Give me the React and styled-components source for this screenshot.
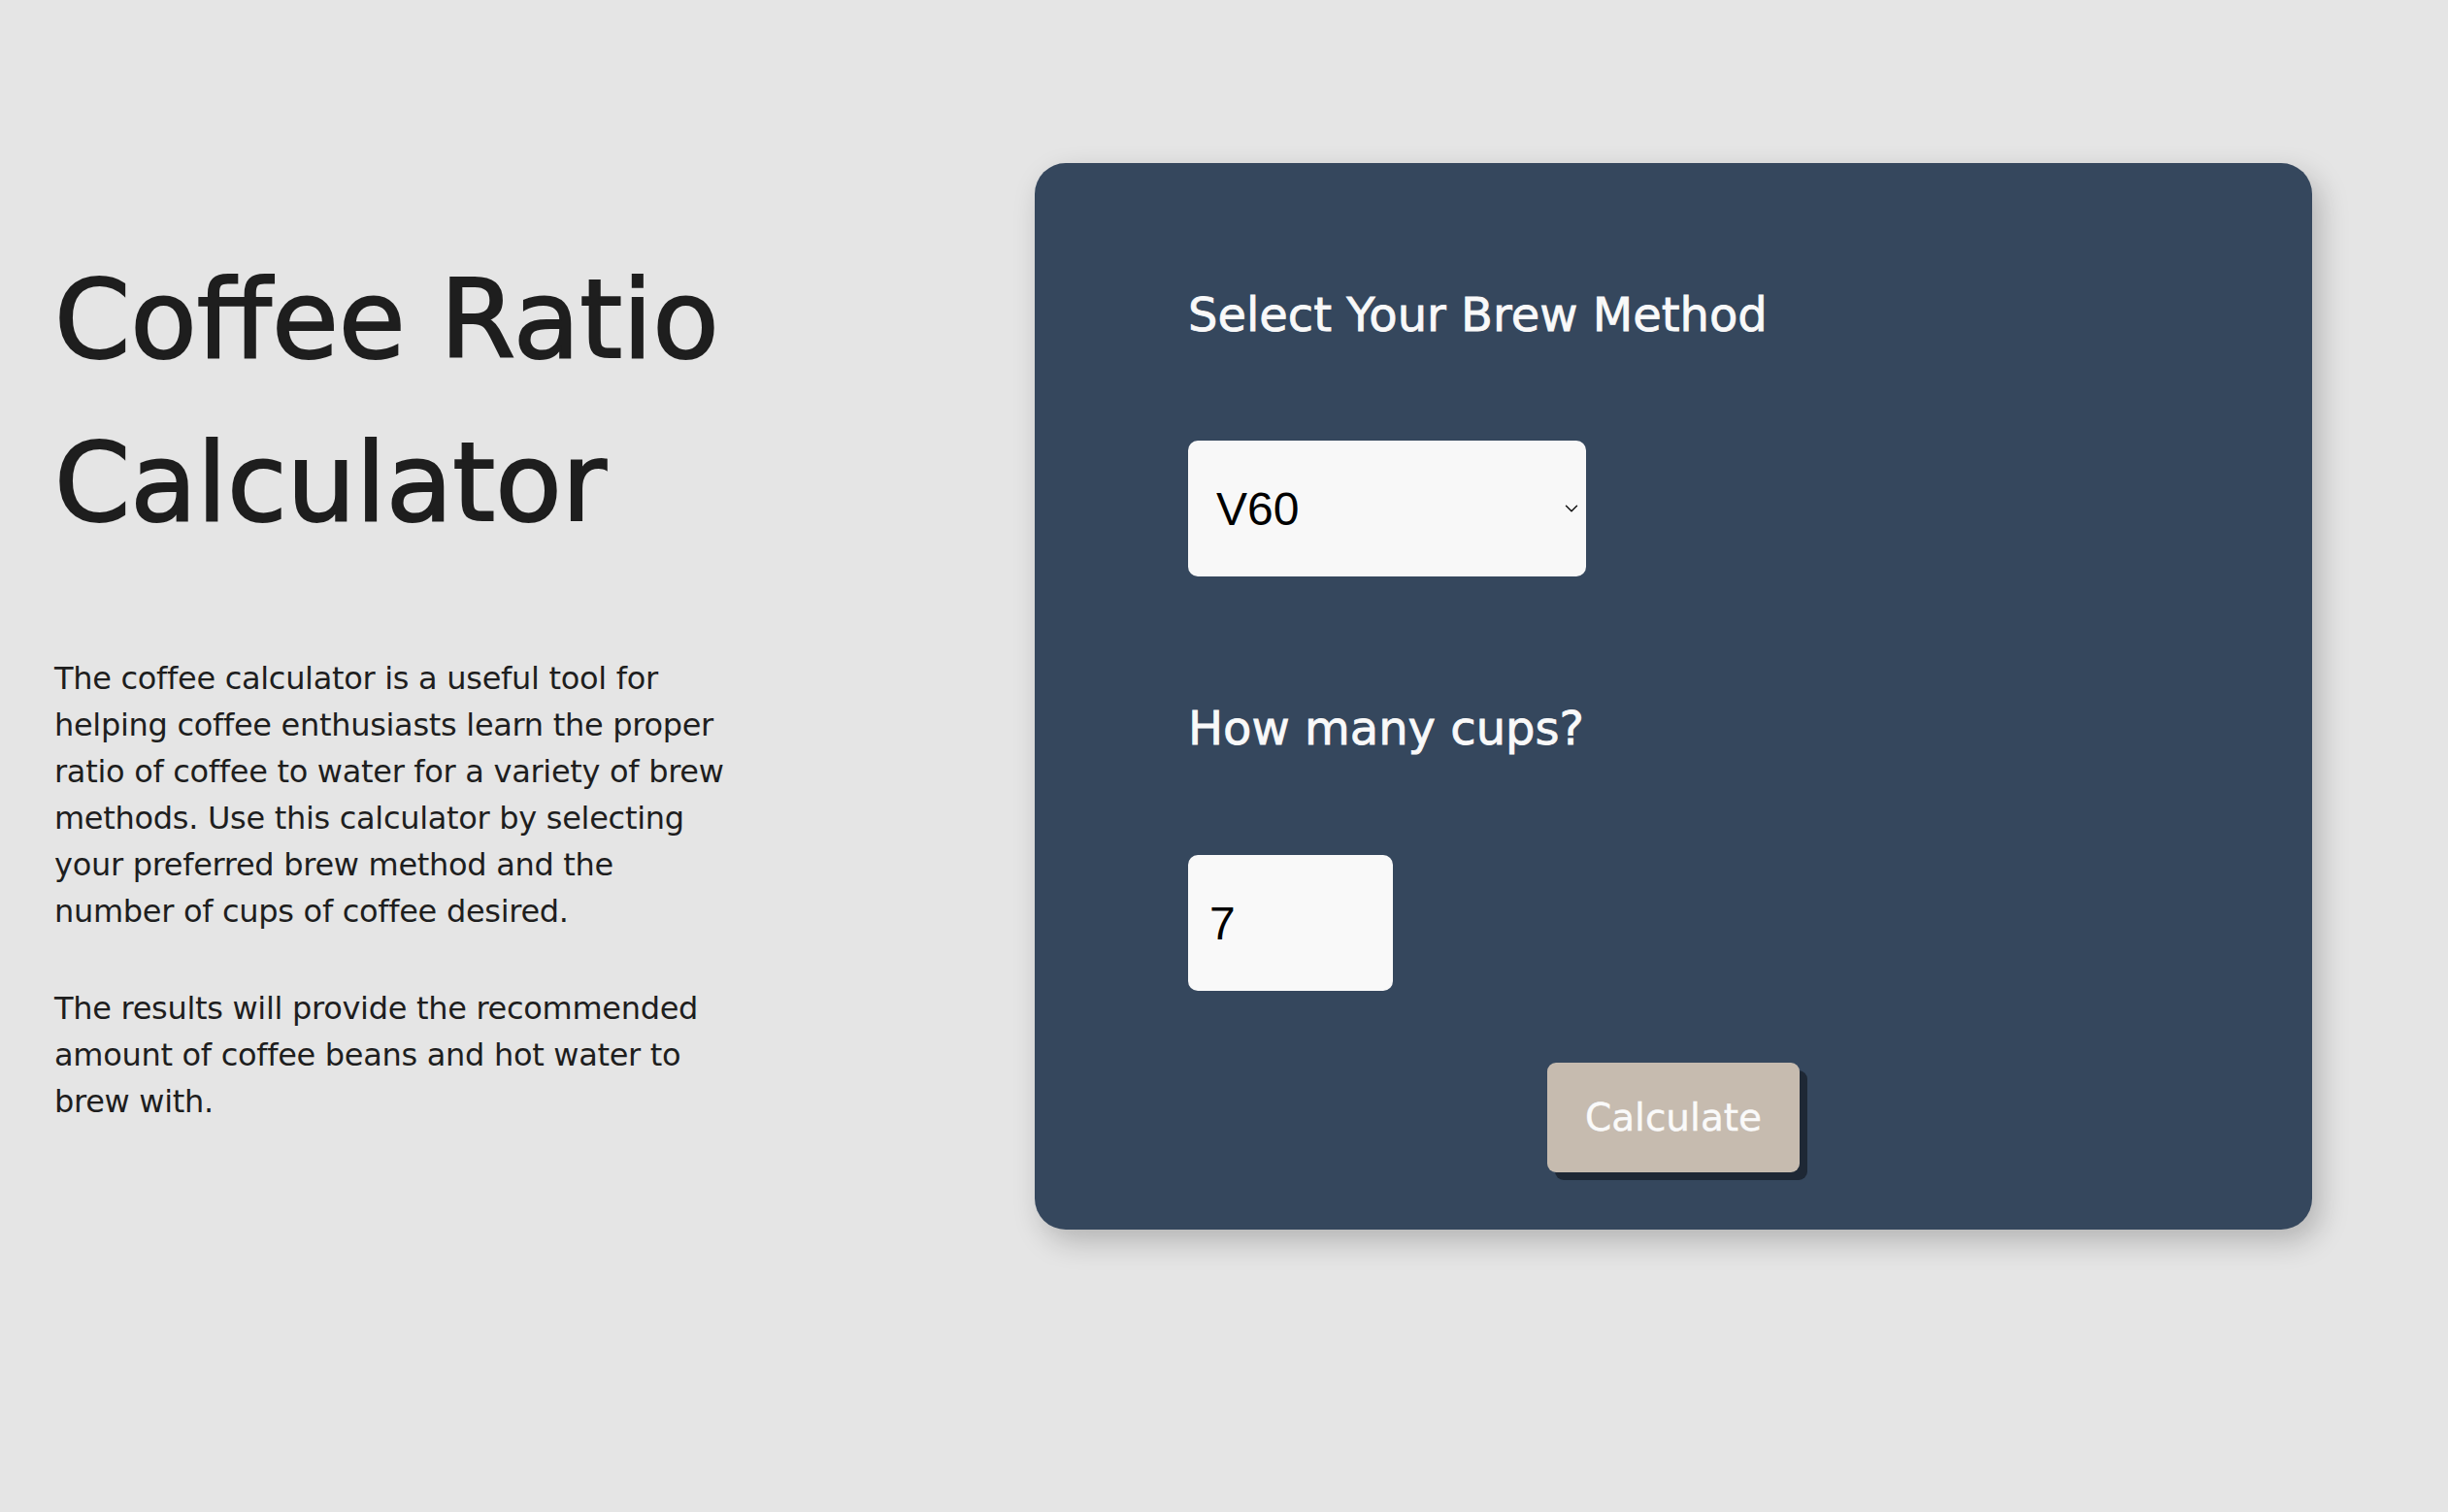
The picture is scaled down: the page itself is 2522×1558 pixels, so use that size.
import React, { useState } from 'react';
import styled, { createGlobalStyle } from 'styled-components';
import { ChevronDown } from 'lucide-react';

const GlobalStyle = createGlobalStyle`
  * {
    box-sizing: border-box;
  }

  body {
    margin: 0;
    background-color: #e5e5e5;
    font-family: 'DejaVu Sans', sans-serif;
  }
`;

const Page = styled.main`
  min-height: 100vh;
  display: flex;
  align-items: flex-start;
  padding: 168px 0 0 56px;
`;

const Intro = styled.section`
  flex: none;
  width: 1010px;
  padding-top: 77px;
`;

const Title = styled.h1`
  margin: 0;
  width: 760px;
  font-size: 112px;
  font-weight: 400;
  line-height: 168px;
  color: #1e1e1e;
  -webkit-text-stroke: 2px #1e1e1e;
`;

const Text = styled.p`
  margin: 0;
  margin-top: ${(p) => p.gap}px;
  width: 698px;
  font-size: 32px;
  line-height: 48px;
  letter-spacing: -0.3px;
  color: #1e1e1e;
`;

const Card = styled.form`
  flex: none;
  width: 1316px;
  display: flex;
  flex-direction: column;
  align-items: flex-start;
  padding: 120px 158px 59px;
  background-color: #35475d;
  border-radius: 32px;
  box-shadow: 8px 12px 30px rgba(0, 0, 0, 0.22);
`;

const Label = styled.h2`
  margin: 0;
  margin-top: ${(p) => p.gap || 0}px;
  font-size: 48px;
  font-weight: 400;
  line-height: 72px;
  color: #f9f9f9;
  -webkit-text-stroke: 0.8px #f9f9f9;
`;

const SelectWrap = styled.div`
  position: relative;
  margin-top: 94px;
  width: 410px;
  height: 140px;

  svg {
    position: absolute;
    top: 50%;
    right: 4px;
    transform: translateY(-50%);
    pointer-events: none;
    color: #111;
  }
`;

const Select = styled.select`
  appearance: none;
  width: 100%;
  height: 100%;
  padding: 0 30px 0 29px;
  border: none;
  border-radius: 10px;
  background-color: #f8f8f8;
  font-family: 'Liberation Sans', Arial, sans-serif;
  font-size: 48px;
  color: #000;
  outline: none;
`;

const CupsInput = styled.input`
  margin-top: 95px;
  width: 211px;
  height: 140px;
  padding: 0 20px 0 22px;
  border: none;
  border-radius: 10px;
  background-color: #f9f9f9;
  font-family: 'Liberation Sans', Arial, sans-serif;
  font-size: 48px;
  color: #000;
  outline: none;
`;

const Button = styled.button`
  align-self: center;
  margin-top: 74px;
  width: 260px;
  height: 113px;
  border: none;
  border-radius: 9px;
  background-color: #c6bbaf;
  box-shadow: 8px 8px 0 #1e2835;
  font-family: 'DejaVu Sans', sans-serif;
  font-size: 39px;
  color: #fafafa;
  -webkit-text-stroke: 0.4px #fafafa;
  cursor: pointer;
`;

const App = () => {
  const [method, setMethod] = useState('V60');
  const [cups, setCups] = useState('7');

  return (
    <>
      <GlobalStyle />
      <Page>
        <Intro>
          <Title>Coffee Ratio Calculator</Title>
          <Text gap={94}>
            The coffee calculator is a useful tool for helping coffee enthusiasts
            learn the proper ratio of coffee to water for a variety of brew methods.
            Use this calculator by selecting your preferred brew method and the
            number of cups of coffee desired.
          </Text>
          <Text gap={52}>
            The results will provide the recommended amount of coffee beans and hot
            water to brew with.
          </Text>
        </Intro>
        <Card onSubmit={(e) => e.preventDefault()}>
          <Label>Select Your Brew Method</Label>
          <SelectWrap>
            <Select value={method} onChange={(e) => setMethod(e.target.value)}>
              <option value="V60">V60</option>
              <option value="Chemex">Chemex</option>
              <option value="French Press">French Press</option>
              <option value="AeroPress">AeroPress</option>
            </Select>
            <ChevronDown size={22} strokeWidth={1.6} />
          </SelectWrap>
          <Label gap={120}>How many cups?</Label>
          <CupsInput
            type="number"
            min="1"
            value={cups}
            onChange={(e) => setCups(e.target.value)}
          />
          <Button type="submit">Calculate</Button>
        </Card>
      </Page>
    </>
  );
};

export default App;
